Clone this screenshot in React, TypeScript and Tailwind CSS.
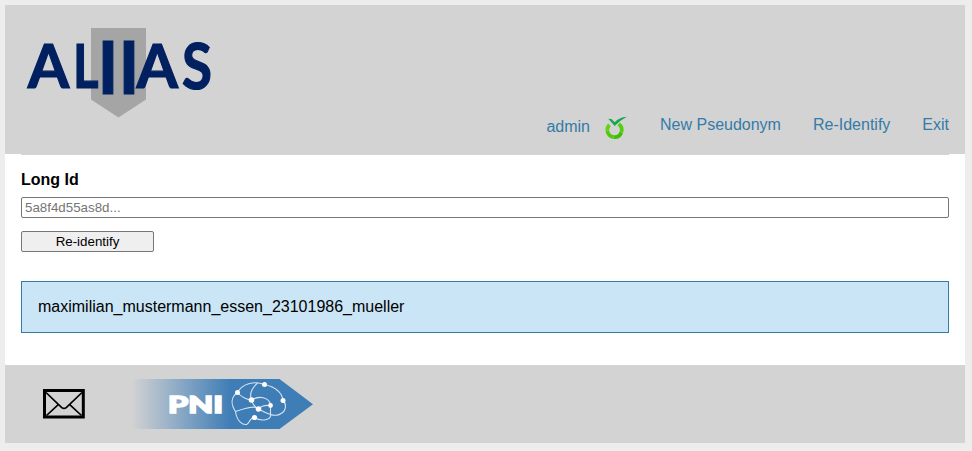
import React from "react";

function AliasLogo() {
  return (
    <svg width="190" height="96" viewBox="24 25 190 96" className="block overflow-visible" role="img" aria-label="ALIIAS">
      <path d="M91 28H146V99.500L118.500 117.500L91 99.500Z" fill="#a5a5a5" />
      <g fill="#002060" stroke="#002060" strokeWidth="1.200" fontFamily="Lato, 'Liberation Sans', sans-serif" fontWeight="700">
        <text x="27.800" y="88.400" fontSize="61" textLength="41.500" lengthAdjust="spacingAndGlyphs">A</text>
        <text x="73" y="88.400" fontSize="61" textLength="25.500" lengthAdjust="spacingAndGlyphs">L</text>
        <text x="97.500" y="93.500" fontSize="73.500" textLength="21" lengthAdjust="spacingAndGlyphs">I</text>
        <text x="118.600" y="93.500" fontSize="73.500" textLength="21" lengthAdjust="spacingAndGlyphs">I</text>
        <text x="136.600" y="88.400" fontSize="61" textLength="41.500" lengthAdjust="spacingAndGlyphs">A</text>
        <text x="182" y="88.900" fontSize="63.500" textLength="30" lengthAdjust="spacingAndGlyphs">S</text>
      </g>
    </svg>
  );
}

function LimeIcon() {
  return (
    <svg width="22" height="24" viewBox="605 116 22 24" className="block">
      <g fill="none" strokeWidth="3.700">
        <path d="M609.500 124.800A7.200 7.200 0 0 0 607.300 130.600" stroke="#64d215" />
        <path d="M607.320 130.800A7.200 7.200 0 0 0 613.800 137.150" stroke="#50c80c" />
        <path d="M614 137.180A7.200 7.200 0 0 0 621.300 132.400" stroke="#42be05" />
        <path d="M621.350 132.200A7.200 7.200 0 0 0 618.600 124.100" stroke="#55cf0c" />
      </g>
      <path d="M608.300 118.700L611.500 119L614.700 122.200Q619 117.500 626.700 116.800Q619.500 120.800 614.700 126Z" fill="#15a651" />
    </svg>
  );
}

function MailIcon() {
  return (
    <svg width="42" height="30" viewBox="0 0 42 30" className="block" fill="none" stroke="#000">
      <path d="M1.500 1.500H40.300V28H1.500Z" strokeWidth="3" />
      <path d="M3 3.500L18.500 18.300Q21 20.500 23.500 18.300L39 3.500M3.500 26.500L15 15.800M38.500 26.500L27 15.800" strokeWidth="1.700" />
    </svg>
  );
}

function PniLogo() {
  return (
    <svg width="182" height="50" viewBox="131 379 182 50" className="block">
      <defs>
        <linearGradient id="pniFade" x1="0" x2="1" y1="0" y2="0">
          <stop offset="0" stopColor="#3e7db6" stopOpacity="0" />
          <stop offset="0.120" stopColor="#3e7db6" stopOpacity="0.220" />
          <stop offset="0.550" stopColor="#3e7db6" />
        </linearGradient>
      </defs>
      <path d="M131 379H279.500L313 404.300L279.500 429H131Z" fill="url(#pniFade)" />
      <text x="168" y="412.500" fontSize="23" fontWeight="900" fontFamily="Lato, 'Liberation Sans', sans-serif" fill="#fff" stroke="#fff" strokeWidth="1.500" textLength="55" lengthAdjust="spacingAndGlyphs">PNI</text>
      <g fill="none" stroke="#d5e3ef" strokeWidth="1.100">
        <path d="M237.500 392.500C242 384 254 380.500 264.500 384.500C275 387 282 392 283 400.500C287 404 286 411 281 413.500C278 416 273 415.500 270.500 414.500C266 413 262 411 258.500 409C255 404.500 243 409 235.500 411.500" />
        <path d="M237.500 392.500C231 397 230.500 404 235.500 411.500C237 422 243 425 246.500 424.500C250 423 249.500 417.500 254.500 417.500C261 422 272 420 270.500 414.500V405.500" />
        <path d="M237.500 392.500C241 397 246 399 251.500 400.500M257.500 383C252 388 249 394 251.500 400.500C253 405 255 407 258.500 409M251.500 400.500C258 395 270 397 270.500 405.500C266 405 261 406 258.500 409" />
      </g>
      <g fill="#fff">
        <circle cx="237.500" cy="392.500" r="2.500" />
        <circle cx="264.500" cy="384.500" r="2.500" />
        <circle cx="283" cy="400.500" r="2.500" />
        <circle cx="251.500" cy="400" r="2.800" />
        <circle cx="258.500" cy="409" r="2.800" />
        <circle cx="270.500" cy="405.500" r="2.400" />
        <circle cx="254.500" cy="417.500" r="2.600" />
      </g>
    </svg>
  );
}

export default function App() {
  return (
    <div className="h-[451px] bg-[#ededed] pl-[5px] pr-[7px] pt-[5px] font-['Liberation_Sans',Arial,sans-serif] text-base leading-[18px] text-black">
      <header className="flex h-[149px] justify-between bg-[#d3d3d3] pl-[19px] pr-4 pt-5">
        <AliasLogo />
        <nav className="flex items-start pt-[91px] text-[#337ba8]">
          <a className="mr-[15px] mt-[2px]">admin</a>
          <div className="mr-[33px]">
            <LimeIcon />
          </div>
          <a className="mr-8">New Pseudonym</a>
          <a className="mr-8">Re-Identify</a>
          <a>Exit</a>
        </nav>
      </header>
      <main className="h-[211px] bg-white px-4">
        <div className="h-px bg-[#d3d3d3]" />
        <label htmlFor="longId" className="block pt-4 font-bold">
          Long Id
        </label>
        <input
          id="longId"
          placeholder="5a8f4d55as8d..."
          className="mt-2 block h-[21px] w-full rounded-[2px] border border-[#767676] bg-white px-[3px] text-[13.333px] leading-[15px] placeholder:text-[#757575]"
        />
        <button className="mt-[13px] block h-[21px] w-[133px] rounded-[2px] border border-[#767676] bg-[#efefef] text-[13.333px] leading-[15px]">
          Re-identify
        </button>
        <div className="mt-[29px] h-[52px] border border-[#337ba8] bg-[#cae5f6] px-4 pt-4">
          maximilian_mustermann_essen_23101986_mueller
        </div>
      </main>
      <footer className="flex h-[78px] items-center bg-[#d3d3d3] pl-[38px]">
        <MailIcon />
        <div className="ml-[46px]">
          <PniLogo />
        </div>
      </footer>
    </div>
  );
}
